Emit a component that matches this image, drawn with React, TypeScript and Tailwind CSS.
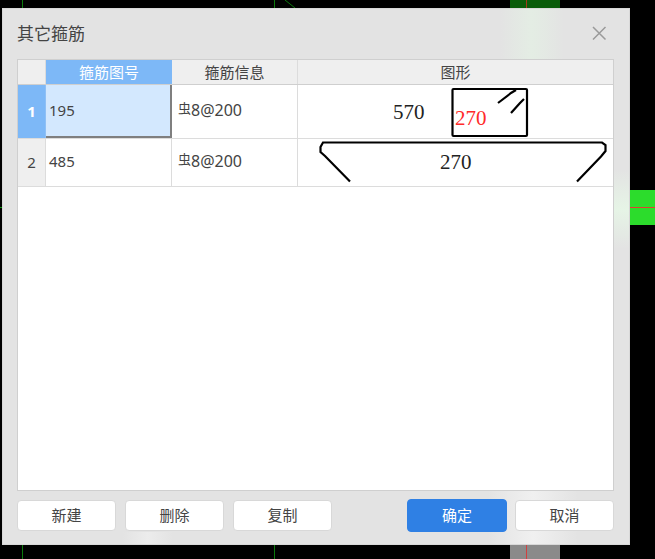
const cjk = '"Noto Sans CJK SC", "Liberation Sans", sans-serif';
const serif = '"Liberation Serif", serif';
const num = '"Noto Sans", "Noto Sans CJK SC", sans-serif';

function Shape1() {
  return (
    <svg width="316" height="54" viewBox="0 0 316 54" className="block">
      <path d="M155.5 4 H228 Q229 4 229 5 V50 Q229 51 228 51 H155.5 Q154.5 51 154.5 50 V5 Q154.5 4 155.5 4 Z" fill="none" stroke="#000" strokeWidth="2.2" />
      <path d="M200 18 L213 8 L218 5 M213 28 L222 18 L226 14" fill="none" stroke="#000" strokeWidth="2.2" />
    </svg>
  );
}

function Shape2() {
  return (
    <svg width="316" height="47" viewBox="0 0 316 47" className="block">
      <path d="M52 42.5 L27 17 L22.5 13 L22.5 8 L25 3.5 H304 L307.5 6 V12 L303 17.5 L279 42.5" fill="none" stroke="#000" strokeWidth="2.2" />
    </svg>
  );
}

function Row({ index, no, active, height, children }: { index: string; no: string; active?: boolean; height: string; children: React.ReactNode }) {
  return (
    <div className={`flex border-b border-[#dcdcdc] ${height}`}>
      <div className={`flex w-[28px] shrink-0 items-center justify-center border-r text-[15px] ${active ? 'border-[#8fc0f5] bg-[#7db8f7] font-bold text-white' : 'border-[#dcdcdc] bg-[#efefef] text-[#444]'}`} style={{ fontFamily: num }}>
        {index}
      </div>
      <div className={`flex w-[126px] shrink-0 items-center pl-[3px] text-[15px] text-[#444] ${active ? 'border-r-2 border-b-2 border-[#7f7f7f] bg-[#d3e8fe]' : 'border-r border-[#dcdcdc] pb-[2px]'}`} style={{ fontFamily: num }}>
        {no}
      </div>
      <div className="flex w-[126px] shrink-0 items-center border-r border-[#dcdcdc] pb-1 pl-[6px] text-[16px] text-[#444]" style={{ fontFamily: num }}>
        <span className="-mt-[5px] text-[13px] leading-none" style={{ fontFamily: cjk }}>虫</span>8@200
      </div>
      <div className="relative min-w-0 flex-1 bg-white">{children}</div>
    </div>
  );
}

function Btn({ label, primary }: { label: string; primary?: boolean }) {
  return (
    <button className={`flex items-center justify-center rounded-[4px] border text-[15px] ${primary ? 'h-[33px] w-[100px] border-[#2f80e4] bg-[#2f80e4] text-white' : 'h-[31px] w-[99px] border-[#d8d8d8] bg-white text-[#444]'}`}>
      {label}
    </button>
  );
}

export default function App() {
  return (
    <div className="relative h-[559px] w-[655px] overflow-hidden bg-black" style={{ fontFamily: cjk }}>
      {/* cad drawing behind the dialog */}
      <div className="absolute top-0 left-[22px] h-[559px] w-px bg-[#0c7a0c]" />
      <div className="absolute top-0 left-[274px] h-[559px] w-px bg-[#0c7a0c]" />
      <svg width="20" height="10" viewBox="0 0 20 10" className="absolute top-0 left-[283px]">
        <path d="M2 0 L12 8" stroke="#0c7a0c" strokeWidth="1" />
      </svg>
      <div className="absolute top-[207px] left-0 h-px w-[2px] bg-[#0c9a0c]" />
      <div className="absolute top-0 left-[510px] h-[8px] w-[50px] bg-[#0a5c0a]" />
      <div className="absolute top-0 left-[526px] h-[8px] w-px bg-[#a33a1a]" />
      <div className="absolute top-[190px] right-0 h-[35px] w-[25px] bg-[#2cdc2c]" />
      <div className="absolute top-[207px] right-0 h-px w-[25px] bg-[#e04030]" />
      <div className="absolute bottom-0 left-[510px] h-[14px] w-[50px] bg-[#8a8a8a]" />
      <div className="absolute bottom-0 left-[526px] h-[14px] w-px bg-[#d04040]" />

      <div className="absolute top-[8px] left-[2px] flex h-[537px] w-[628px] flex-col overflow-hidden border border-[#d8d8d8] bg-[#e3e3e3] pr-[15px] pl-[14px]">
        {/* acrylic glow from what lies behind */}
        <div className="absolute top-0 left-[497px] h-[50px] w-[64px] bg-gradient-to-r from-transparent via-[#e4ede4] to-transparent" />
        <div className="absolute top-[160px] right-0 h-[80px] w-[15px] bg-gradient-to-b from-transparent via-[#e6f4e6] to-transparent" />
        <div className="absolute bottom-0 left-[485px] h-[55px] w-[90px] bg-gradient-to-r from-transparent via-[#f0f0f0] to-transparent" />
        <div className="absolute bottom-0 left-[120px] h-[12px] w-[50px] bg-gradient-to-r from-transparent via-[#ececec] to-transparent" />

        <div className="relative flex h-[50px] shrink-0 items-center justify-between pb-[2px]">
          <span className="text-[17px] text-[#444]">其它箍筋</span>
          <svg width="16" height="16" viewBox="0 0 16 16" className="mr-[7px]">
            <path d="M2 2 L14.5 14.5 M14.5 2 L2 14.5" stroke="#9a9a9a" strokeWidth="1.5" />
          </svg>
        </div>

        <div className="relative flex h-[432px] shrink-0 flex-col border border-[#cfcfcf] bg-white">
          <div className="flex h-[25px] shrink-0 border-b border-[#cfcfcf] bg-[#efefef] text-[15px] text-[#444]">
            <div className="w-[28px] shrink-0 border-r border-[#dcdcdc]" />
            <div className="flex w-[126px] shrink-0 items-center justify-center bg-[#7db8f7] text-white">箍筋图号</div>
            <div className="flex w-[126px] shrink-0 items-center justify-center border-r border-[#dcdcdc]">箍筋信息</div>
            <div className="flex flex-1 items-center justify-center">图形</div>
          </div>

          <Row index="1" no="195" active height="h-[54px]">
            <Shape1 />
            <span className="absolute top-[15px] left-[95px] text-[21px] leading-6 text-[#222]" style={{ fontFamily: serif }}>570</span>
            <span className="absolute top-[21px] left-[157px] text-[21px] leading-6 text-[#ff2a2a]" style={{ fontFamily: serif }}>270</span>
          </Row>
          <Row index="2" no="485" height="h-[48px]">
            <Shape2 />
            <span className="absolute top-[11px] left-[142px] text-[21px] leading-6 text-[#222]" style={{ fontFamily: serif }}>270</span>
          </Row>
        </div>

        <div className="relative flex flex-1 items-center pb-[5px]">
          <div className="flex gap-[9px]">
            <Btn label="新建" />
            <Btn label="删除" />
            <Btn label="复制" />
          </div>
          <div className="ml-auto flex items-center gap-[8px]">
            <Btn label="确定" primary />
            <Btn label="取消" />
          </div>
        </div>
      </div>
    </div>
  );
}
